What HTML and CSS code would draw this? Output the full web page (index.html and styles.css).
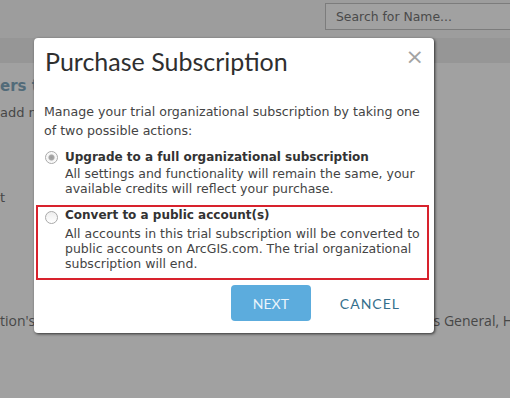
FILE: index.html
```html
<!DOCTYPE html>
<html lang="en">
<head>
    <meta charset="UTF-8">
    <title>Purchase Subscription</title>
    <link rel="stylesheet" href="styles.css">
</head>
<body>
    <div class="topbar">
        <input class="search" type="text" placeholder="Search for Name...">
    </div>
    <div class="subbar"></div>

    <!-- page behind the overlay, mostly covered by the dialog -->
    <div class="page">
        <h2 class="page-title">ers t</h2>
        <p class="page-line">add n</p>
        <p class="page-mark">t</p>
        <div class="page-row">
            <span>tion's</span>
            <span class="page-right">'s General, H</span>
        </div>
    </div>

    <div class="dialog">
        <div class="dialog-head">
            <h1>Purchase Subscription</h1>
            <span class="close">&times;</span>
        </div>
        <p class="intro">Manage your trial organizational subscription by taking one of two possible actions:</p>

        <label class="option">
            <input type="radio" name="action" checked disabled>
            <span class="option-text">
                <b>Upgrade to a full organizational subscription</b>
                All settings and functionality will remain the same, your available credits will reflect your purchase.
            </span>
        </label>

        <label class="option highlight">
            <input type="radio" name="action">
            <span class="option-text">
                <b>Convert to a public account(s)</b>
                All accounts in this trial subscription will be converted to public accounts on ArcGIS.com. The trial organizational subscription will end.
            </span>
        </label>

        <div class="actions">
            <button class="btn-next">NEXT</button>
            <button class="btn-cancel">CANCEL</button>
        </div>
    </div>
</body>
</html>
```

FILE: styles.css
```css
body {
    margin: 0;
    width: 510px;
    height: 398px;
    overflow: hidden;
    background: #a1a1a1;
    font-family: 'DejaVu Sans', Verdana, sans-serif;
    position: relative;
}

.topbar {
    height: 38px;
    background: #9d9d9d;
    display: flex;
    justify-content: flex-end;
    align-items: flex-start;
}

.search {
    margin-top: 3px;
    margin-right: -20px;
    width: 205px;
    height: 27px;
    box-sizing: border-box;
    border: 1px solid #7c7c7c;
    background: #a1a1a1;
    padding: 0 10px;
    font-family: 'DejaVu Sans', Verdana, sans-serif;
    font-size: 12.4px;
    color: #4a4a4a;
}

.search::placeholder {
    color: #4a4a4a;
}

.subbar {
    height: 25px;
    background: #969696;
}

.page {
    padding-top: 14px;
    color: #474747;
}

.page-title {
    margin: 0;
    font-size: 15px;
    font-weight: bold;
    color: #526b79;
    white-space: nowrap;
}

.page-line {
    margin: 10px 0 0;
    font-size: 13px;
    white-space: nowrap;
}

.page-mark {
    margin: 70px 0 0;
    font-size: 13px;
}

.page-row {
    margin-top: 106px;
    display: flex;
    justify-content: space-between;
    font-family: 'Open Sans', sans-serif;
    font-size: 14px;
    white-space: nowrap;
}

.page-right {
    margin-right: -3px;
}

.dialog {
    position: absolute;
    left: 34px;
    top: 38px;
    width: 400px;
    height: 295px;
    box-sizing: border-box;
    background: #fff;
    border-radius: 4px;
    box-shadow: 1px 1px 3px rgba(0, 0, 0, 0.7);
    padding: 0 0 0 2px;
    color: #3a3a3a;
}

.dialog-head {
    display: flex;
    justify-content: space-between;
    padding: 8px 10px 0 9px;
}

.dialog-head h1 {
    margin: 0;
    font-family: 'Lato', sans-serif;
    font-weight: normal;
    font-size: 25px;
    line-height: 30px;
    color: #2f2f2f;
}

.close {
    font-family: 'DejaVu Sans', sans-serif;
    font-size: 22px;
    line-height: 20px;
    color: #a3a3a3;
    margin-top: 1px;
}

.intro {
    margin: 26px 14px 0 8px;
    font-size: 12.6px;
    line-height: 19px;
    color: #444;
}

.option {
    display: flex;
    align-items: flex-start;
    margin: 10px 5px 0 0;
    padding: 0 8px;
    font-size: 12.5px;
    line-height: 15px;
    color: #444;
}

.option input {
    appearance: none;
    flex: none;
    box-sizing: border-box;
    margin: 1px 7px 0 1px;
    width: 13px;
    height: 13px;
    border: 1px solid #a9a9a9;
    border-radius: 50%;
    background: linear-gradient(#eeeeee, #ffffff);
}

.option input:checked {
    background: radial-gradient(circle, #9b9b9b 0, #a8a8a8 2.5px, #f2f2f2 3.5px, #ffffff 6px);
}

.option b {
    display: block;
    font-size: 12px;
    color: #333;
    margin-bottom: 1px;
}

.highlight {
    margin-top: 9px;
    border: 2px solid #d8222d;
    padding: 1px 1px 7px 6px;
}

.highlight input {
    margin-top: 3px;
}

.highlight b {
    margin-bottom: 3px;
}

.actions {
    display: flex;
    justify-content: flex-end;
    align-items: center;
    gap: 21px;
    padding: 5px 26px 0 0;
}

.btn-next {
    width: 80px;
    height: 36px;
    border: 0;
    border-radius: 4px;
    background: #5cacdd;
    color: #eaf4fb;
    font-family: 'Lato', sans-serif;
    font-size: 14px;
}

.btn-cancel {
    border: 0;
    background: none;
    color: #356f8c;
    font-family: 'Lato', sans-serif;
    font-size: 14px;
    letter-spacing: 1px;
    padding: 0 8px;
}
```
